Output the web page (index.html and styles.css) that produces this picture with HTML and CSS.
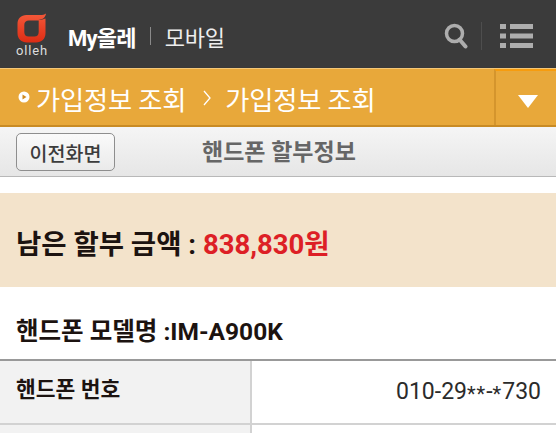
FILE: index.html
```html
<!DOCTYPE html>
<html lang="ko">
<head>
  <meta charset="UTF-8" />
  <title>My올레 모바일</title>
  <link rel="stylesheet" href="styles.css">
</head>
<body>

  <!-- Header -->
  <div class="header">
    <div class="logo">
      <svg class="logo-mark" width="30" height="30" viewBox="0 0 30 30">
        <defs>
          <linearGradient id="logoFill" x1="0" y1="0" x2="0" y2="1">
            <stop offset="0" stop-color="#f4593a" />
            <stop offset="1" stop-color="#dd2c14" />
          </linearGradient>
        </defs>
        <path fill="url(#logoFill)" d="M29 0.500 C28.500 4 26.500 6.200 22.500 6.600 L21.500 6.700 C23.800 6.900 25.500 6.600 28.500 5.500 L28.500 20 C28.500 26 24.500 29.500 19 29.500 L10 29.500 C4.500 29.500 0.500 26 0.500 20 L0.500 11 C0.500 5.500 4 2 9.500 2 L23 2 C25.500 2 27.500 1.500 29 0.500 Z M12 7.500 C9 7.500 7.300 9.200 7.300 12 L7.300 19 C7.300 22 9 23.600 11.500 23.600 L17.500 23.600 C20 23.600 21.700 22 21.700 19 L21.700 7.500 Z" fill-rule="evenodd" />
      </svg>
      <span class="logo-text">olleh</span>
    </div>
    <div class="site-title">
      <span class="site-name">My올레</span>
      <span class="site-sep"></span>
      <span class="site-sub">모바일</span>
    </div>
    <div class="header-icons">
      <svg width="24" height="26" viewBox="0 0 24 26">
        <circle cx="10.500" cy="10.500" r="8" fill="none" stroke="#adadad" stroke-width="3.500" />
        <path d="M15.500 16.500 L21.500 23.500" stroke="#adadad" stroke-width="4" stroke-linecap="round" />
      </svg>
      <span class="icon-sep"></span>
      <svg width="33" height="24" viewBox="0 0 33 24" fill="#adadad">
        <rect x="0" y="0" width="6" height="5" />
        <rect x="10" y="0" width="23" height="5" />
        <rect x="0" y="9.500" width="6" height="5" />
        <rect x="10" y="9.500" width="23" height="5" />
        <rect x="0" y="19" width="6" height="5" />
        <rect x="10" y="19" width="23" height="5" />
      </svg>
    </div>
  </div>

  <!-- Breadcrumb -->
  <div class="crumb-bar">
    <div class="crumbs">
      <svg class="bullet" width="12" height="12" viewBox="0 0 12 12">
        <circle cx="6" cy="6" r="5.500" fill="#fff" />
        <path d="M4.500 3.500 L8.500 6 L4.500 8.500 Z" fill="#d08a20" />
      </svg>
      <span>가입정보 조회</span>
      <svg class="chevron" width="8" height="16" viewBox="0 0 8 16">
        <path d="M1 1 L7 8 L1 15" fill="none" stroke="#fff" stroke-width="1.300" />
      </svg>
      <span>가입정보 조회</span>
    </div>
    <div class="crumb-toggle"><span class="arrow"></span></div>
  </div>

  <!-- Title bar -->
  <div class="title-bar">
    <button class="back-btn">이전화면</button>
    <h1 class="page-title">핸드폰 할부정보</h1>
  </div>

  <!-- Balance -->
  <div class="balance">남은 할부 금액 : <span class="amount">838,830원</span></div>

  <h2 class="model">핸드폰 모델명 :IM-A900K</h2>

  <!-- Info table -->
  <div class="info-table">
    <div class="info-row">
      <div class="info-label">핸드폰 번호</div>
      <div class="info-value">010-29<span class="mask">**</span>-<span class="mask">*</span>730</div>
    </div>
    <div class="info-row cut">
      <div class="info-label"></div>
      <div class="info-value"></div>
    </div>
  </div>

</body>
</html>
```

FILE: styles.css
```css
html, body {
  height: 433px;
  overflow: hidden;
}

body {
  font-family: Roboto, "Noto Sans CJK KR", sans-serif;
  background: #fff;
  color: #1c1310;
  margin: 0;
  padding: 0;
}

.header {
  height: 68px;
  background: #3b3b3b;
  display: flex;
  align-items: center;
  padding: 0 23px 0 15px;
}

.logo {
  width: 34px;
  display: flex;
  flex-direction: column;
  align-items: center;
  margin-top: 2px;
}

.logo-mark {
  display: block;
}

.logo-text {
  font-size: 13px;
  line-height: 13px;
  color: #ddd;
  letter-spacing: 0.8px;
  margin-top: 1px;
}

.site-title {
  display: flex;
  align-items: center;
  margin: 4px 0 0 19px;
  color: #fff;
}

.site-name {
  font-size: 22px;
  font-weight: 700;
  letter-spacing: -0.8px;
}

.site-sep {
  width: 1px;
  height: 18px;
  background: #8a8a8a;
  margin: 0 14px 0 14px;
}

.site-sub {
  font-size: 22px;
  color: #eee;
  letter-spacing: -0.2px;
}

.header-icons {
  margin: 3px 0 0 auto;
  display: flex;
  align-items: center;
}

.icon-sep {
  width: 1px;
  height: 28px;
  background: #4e4e4e;
  margin: 0 18px 0 13px;
}

.crumb-bar {
  height: 56px;
  background: #e8a83a;
  border-top: 1px solid #f4c777;
  border-bottom: 2px solid #c98b24;
  box-shadow: 0 1px 2px rgba(0,0,0,0.3);
  display: flex;
  position: relative;
}

.crumbs {
  flex: 1;
  display: flex;
  align-items: center;
  padding: 2px 0 0 18px;
  color: #fff;
  font-size: 26.3px;
  letter-spacing: -0.2px;
}

.bullet {
  margin: -2px 6px 0 0;
}

.chevron {
  margin: 0 14px 0 17px;
}

.crumb-toggle {
  width: 60px;
  border-left: 2px solid #d4952d;
  border-top: 2px solid #f79c0e;
  display: flex;
  align-items: center;
  justify-content: center;
}

.arrow {
  width: 0;
  height: 0;
  border-left: 10px solid transparent;
  border-right: 10px solid transparent;
  border-top: 13px solid #fff;
  margin: 6px 0 0 4px;
}

.title-bar {
  height: 50px;
  box-sizing: border-box;
  background: linear-gradient(#f5f5f5, #e6e6e6);
  border-bottom: 1px solid #b8b8b8;
  display: flex;
  align-items: center;
  position: relative;
  padding-left: 16px;
}

.back-btn {
  width: 99px;
  height: 38px;
  margin-top: 1px;
  padding: 0;
  font-family: inherit;
  font-size: 19.5px;
  font-weight: 500;
  color: #3c3c3c;
  background: linear-gradient(#fafafa, #eaeaea);
  border: 1px solid #8e8e8e;
  border-radius: 5px;
}

.page-title {
  margin: 0 0 3px 87px;
  font-size: 23px;
  font-weight: 700;
  color: #666;
}

.balance {
  margin-top: 16px;
  height: 91px;
  background: #f3e3cb;
  display: flex;
  align-items: center;
  padding: 3px 0 0 16px;
  font-size: 27.5px;
  font-weight: 700;
  white-space: pre;
}

.amount {
  color: #dd1f26;
}

.model {
  margin: 30px 0 0 16px;
  height: 42px;
  font-size: 24.5px;
  line-height: 30px;
  font-weight: 700;
}

.info-table {
  border-top: 2px solid #999;
}

.info-row {
  display: flex;
  height: 62px;
  border-bottom: 2px solid #d2d2d2;
}

.info-row.cut {
  height: 8px;
  border-bottom: 0;
}

.info-label {
  width: 234px;
  background: #f2f2f2;
  border-right: 2px solid #d2d2d2;
  padding-left: 16px;
  font-size: 21.5px;
  font-weight: 700;
  line-height: 58px;
}

.info-value {
  flex: 1;
  text-align: right;
  padding-right: 15px;
  font-size: 23px;
  color: #2b2b2b;
  line-height: 62px;
}

.mask {
  font-size: 20px;
  letter-spacing: 1px;
  vertical-align: -2px;
}
```
